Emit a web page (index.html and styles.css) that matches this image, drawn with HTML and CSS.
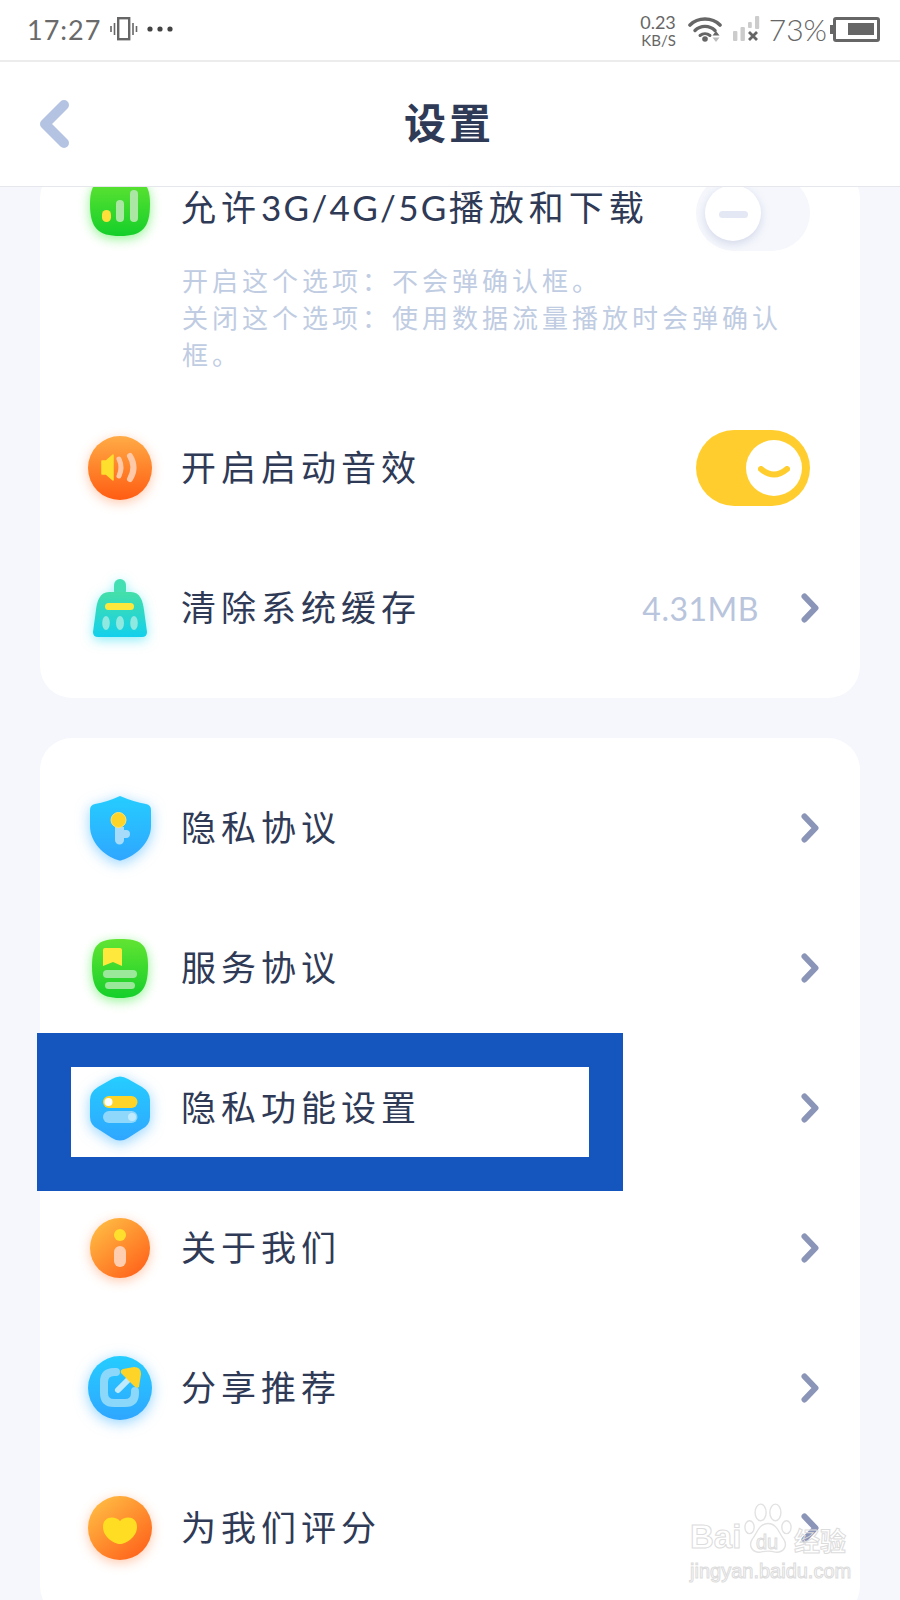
FILE: index.html
```html
<!DOCTYPE html>
<html lang="zh-CN">
<head>
  <meta charset="UTF-8">
  <meta name="viewport" content="width=device-width, initial-scale=1.0">
  <title>设置</title>
  <link rel="stylesheet" href="styles.css">
</head>
<body>

  <!-- shared gradients for the icons -->
  <svg class="defs" aria-hidden="true">
    <defs>
      <linearGradient id="gGreen" x1="0" y1="0" x2="0" y2="1"><stop offset="0" stop-color="#62e432"/><stop offset="1" stop-color="#14cf2a"/></linearGradient>
      <linearGradient id="gOrange" x1="0" y1="0" x2="0" y2="1"><stop offset="0" stop-color="#ffab45"/><stop offset="1" stop-color="#ff5c12"/></linearGradient>
      <linearGradient id="gOrangeDiag" x1="0.2" y1="0.1" x2="0.85" y2="0.9"><stop offset="0" stop-color="#ffb540"/><stop offset="1" stop-color="#ff661c"/></linearGradient>
      <linearGradient id="gTeal" x1="0" y1="0" x2="0" y2="1"><stop offset="0" stop-color="#45dfa8"/><stop offset="1" stop-color="#12d0ec"/></linearGradient>
      <linearGradient id="gBlue" x1="0" y1="0" x2="0" y2="1"><stop offset="0" stop-color="#25cdff"/><stop offset="1" stop-color="#2fa6ff"/></linearGradient>
    </defs>
  </svg>

  <div class="page">
    <div class="statusbar">
      <div class="status-left">
        <span class="clock">17:27</span>
        <svg class="vibrate" width="28" height="26" viewBox="0 0 28 26">
          <rect x="8.2" y="2.2" width="11" height="21" fill="none" stroke="#666" stroke-width="2.4"/>
          <path d="M4.5 7v12M1 10v6M23 7v12M26.5 10v6" stroke="#666" stroke-width="1.6" fill="none"/>
        </svg>
        <svg class="dots" width="26" height="6" viewBox="0 0 26 6">
          <circle cx="3" cy="3" r="2.6" fill="#444"/><circle cx="13" cy="3" r="2.6" fill="#444"/><circle cx="23" cy="3" r="2.6" fill="#444"/>
        </svg>
      </div>
      <div class="status-right">
        <div class="rate"><span class="rate-num">0.23</span><span class="rate-unit">KB/S</span></div>
        <svg class="wifi" width="36" height="26" viewBox="0 0 36 26">
          <path d="M2 9C10 1 24 1 32 9" fill="none" stroke="#666" stroke-width="3.6" stroke-linecap="round"/>
          <path d="M7 14.5C12.5 9 21.5 9 27 14.5" fill="none" stroke="#666" stroke-width="3.4" stroke-linecap="round"/>
          <path d="M12 19.5C15 17 19 17 22 19.5" fill="none" stroke="#666" stroke-width="3" stroke-linecap="round"/>
          <circle cx="17" cy="23" r="2.8" fill="#666"/>
          <path d="M28 15l3.5 4.5h-7z" fill="#666"/><path d="M28 26l3.5-4.5h-7z" fill="#bbb"/>
        </svg>
        <svg class="signal" width="28" height="26" viewBox="0 0 28 26">
          <rect x="0" y="15" width="4.4" height="10" rx="1" fill="#ccc"/>
          <rect x="7.5" y="11" width="4.4" height="14" rx="1" fill="#ccc"/>
          <rect x="15" y="6" width="3.8" height="6" rx="1" fill="#ccc"/>
          <rect x="22" y="0" width="4.2" height="13" rx="1" fill="#ccc"/>
          <path d="M16 16l8 8M24 16l-8 8" stroke="#666" stroke-width="2.8"/>
        </svg>
        <span class="battery-text">73%</span>
        <div class="battery"><div class="battery-level"></div></div>
      </div>
    </div>

    <div class="header">
      <svg class="back" width="32" height="50" viewBox="0 0 32 50">
        <path d="M26 6L7 25l19 19" fill="none" stroke="#b5c3e3" stroke-width="10" stroke-linecap="round" stroke-linejoin="round"/>
      </svg>
      <h1 class="title">设置</h1>
      <span></span>
    </div>

    <div class="scroll">
      <div class="card card-first">
        <div class="row row-head">
          <svg class="icon glow-green" viewBox="0 0 80 80">
            <path d="M40 10C62 10 70 14 70 36C70 60 62 68 40 68C18 68 10 60 10 36C10 14 18 10 40 10Z" fill="url(#gGreen)"/>
            <rect x="22" y="42" width="9" height="12" rx="4.5" fill="#ffdf3a"/>
            <rect x="36" y="32" width="8" height="22" rx="4" fill="#ace6a4"/>
            <rect x="50" y="22" width="8" height="32" rx="4" fill="#ace6a4"/>
          </svg>
          <span class="label">允许<span class="latin">3G/4G/5G</span>播放和下载</span>
          <div class="toggle toggle-off"><div class="knob"><div class="dash"></div></div></div>
        </div>
        <p class="desc">开启这个选项：不会弹确认框。<br>关闭这个选项：使用数据流量播放时会弹确认框。</p>

        <div class="row">
          <svg class="icon glow-orange" viewBox="0 0 80 80">
            <circle cx="40" cy="40" r="32" fill="url(#gOrange)"/>
            <path d="M22 33h4l7-6v25l-7-6h-4z" fill="#ffdf2e" stroke="#ffdf2e" stroke-width="1.5" stroke-linejoin="round"/>
            <path d="M39 31Q43 39.5 39 48" fill="none" stroke="#ffc9a8" stroke-width="5" stroke-linecap="round"/>
            <path d="M50 28Q57 39.5 50 51" fill="none" stroke="#ffc9a8" stroke-width="6" stroke-linecap="round"/>
          </svg>
          <span class="label">开启启动音效</span>
          <div class="toggle toggle-on">
            <div class="knob">
              <svg width="32" height="16" viewBox="0 0 32 16"><path d="M3 3Q16 14 29 3" fill="none" stroke="#ffce2e" stroke-width="6" stroke-linecap="round"/></svg>
            </div>
          </div>
        </div>

        <div class="row">
          <svg class="icon glow-cyan" viewBox="0 0 80 80">
            <rect x="34" y="11" width="12" height="18" rx="6" fill="#45dfb4"/>
            <path d="M29 24H51C60 24 63 33 64 42L67 64Q67 69 62 69H18Q13 69 13 64L16 42C17 33 20 24 29 24Z" fill="url(#gTeal)"/>
            <rect x="25" y="35" width="29" height="7" rx="3.5" fill="#ffe83c"/>
            <ellipse cx="26" cy="55" rx="3.8" ry="7" fill="#8fe9e0"/>
            <ellipse cx="40" cy="55" rx="4" ry="7" fill="#8fe9e0"/>
            <ellipse cx="54" cy="55" rx="3.8" ry="7" fill="#8fe9e0"/>
          </svg>
          <span class="label">清除系统缓存</span>
          <span class="value">4.31MB</span>
          <svg class="chevron" viewBox="0 0 18 30"><path d="M3.5 3.5L14.5 15L3.5 26.5" /></svg>
        </div>
      </div>

      <div class="card">
        <div class="row">
          <svg class="icon glow-blue" viewBox="0 0 80 80">
            <path d="M40 8Q54 14 66 16Q71 17 71 22V38C71 54 56 68 42 72Q40 73 38 72C24 68 10 54 10 38V22Q10 17 15 16Q27 14 40 8Z" fill="url(#gBlue)"/>
            <path d="M35 39h9v3h2a4 4 0 0 1 0 8h-2v2a4.5 4.5 0 0 1-9 0z" fill="#a6dcfa"/>
            <circle cx="38.5" cy="32" r="7.5" fill="#ffd428" stroke="#ffe36a" stroke-width="1"/>
          </svg>
          <span class="label">隐私协议</span>
          <svg class="chevron" viewBox="0 0 18 30"><path d="M3.5 3.5L14.5 15L3.5 26.5" /></svg>
        </div>
        <div class="row">
          <svg class="icon glow-green" viewBox="0 0 80 80">
            <path d="M40 11C60 11 68 15 68 38C68 62 60 70 40 70C20 70 12 62 12 38C12 15 20 11 40 11Z" fill="url(#gGreen)"/>
            <path d="M25 20H40Q42 20 42 22V38L33 34L23 38V22Q23 20 25 20Z" fill="#ffe83c"/>
            <rect x="23" y="42" width="34" height="8" rx="4" fill="#9be89b"/>
            <rect x="25" y="54" width="30" height="7" rx="3.5" fill="#9be89b"/>
          </svg>
          <span class="label">服务协议</span>
          <svg class="chevron" viewBox="0 0 18 30"><path d="M3.5 3.5L14.5 15L3.5 26.5" /></svg>
        </div>
        <div class="row">
          <svg class="icon glow-blue" viewBox="0 0 80 80">
            <path d="M32 11Q40 6 48 11L62 19Q70 24 70 32V49Q70 57 62 61L48 70Q40 75 32 70L18 61Q10 57 10 49V32Q10 24 18 19Z" fill="url(#gBlue)"/>
            <rect x="23" y="28" width="34.5" height="12" rx="6" fill="#ffd428"/>
            <circle cx="28.5" cy="34" r="4" fill="#fff"/>
            <rect x="23" y="43" width="34.5" height="12" rx="6" fill="#8fd8fb"/>
            <circle cx="52" cy="49" r="4" fill="#bfeafe"/>
          </svg>
          <span class="label">隐私功能设置</span>
          <svg class="chevron" viewBox="0 0 18 30"><path d="M3.5 3.5L14.5 15L3.5 26.5" /></svg>
        </div>
        <div class="row">
          <svg class="icon glow-orange" viewBox="0 0 80 80">
            <circle cx="40" cy="40" r="30" fill="url(#gOrangeDiag)"/>
            <circle cx="40" cy="27" r="6" fill="#ffdf2e"/>
            <rect x="34" y="38" width="12" height="21" rx="6" fill="#ffcdb0"/>
          </svg>
          <span class="label">关于我们</span>
          <svg class="chevron" viewBox="0 0 18 30"><path d="M3.5 3.5L14.5 15L3.5 26.5" /></svg>
        </div>
        <div class="row">
          <svg class="icon glow-blue" viewBox="0 0 80 80">
            <circle cx="40" cy="40" r="32" fill="url(#gBlue)"/>
            <path d="M36 24H34Q24 24 24 34V45Q24 55 34 55H45Q55 55 55 45V43" fill="none" stroke="#8cd8fb" stroke-width="8" stroke-linecap="round"/>
            <path d="M38 42L47 33" stroke="#bfeafe" stroke-width="6" stroke-linecap="round"/>
            <path d="M43 21L54 19Q61 19 61 26L59 39Q57 41 54 38L41 25Q40 22 43 21Z" fill="#ffd428"/>
          </svg>
          <span class="label">分享推荐</span>
          <svg class="chevron" viewBox="0 0 18 30"><path d="M3.5 3.5L14.5 15L3.5 26.5" /></svg>
        </div>
        <div class="row">
          <svg class="icon glow-orange" viewBox="0 0 80 80">
            <circle cx="40" cy="40" r="32" fill="url(#gOrangeDiag)"/>
            <path d="M40 33C36 28 23 27 23 39C23 49 34 56 40 56C46 56 57 49 57 39C57 27 44 28 40 33Z" fill="#ffdd22"/>
          </svg>
          <span class="label">为我们评分</span>
          <svg class="chevron" viewBox="0 0 18 30"><path d="M3.5 3.5L14.5 15L3.5 26.5" /></svg>
        </div>
      </div>
    </div>

    <!-- annotation box drawn over the screenshot -->
    <div class="highlight"></div>

    <!-- watermark -->
    <div class="watermark">
      <div class="wm-top">
        <span class="wm-bai">Bai</span>
        <div class="wm-paw">
          <svg width="48" height="52" viewBox="0 0 52 56">
            <g fill="none" stroke="#e2e2e2" stroke-width="1.5">
              <ellipse cx="6" cy="26" rx="5" ry="7"/>
              <ellipse cx="18" cy="10" rx="6" ry="9"/>
              <ellipse cx="34" cy="10" rx="6" ry="9"/>
              <ellipse cx="46" cy="26" rx="5" ry="7"/>
              <path d="M26 22C16 22 14 33 9 39C4 47 10 54 18 53C22 52 30 52 34 53C42 54 48 47 43 39C38 33 36 22 26 22Z"/>
            </g>
          </svg>
          <span class="wm-du">du</span>
        </div>
        <span class="wm-cn">经验</span>
      </div>
      <div class="wm-url">jingyan.baidu.com</div>
    </div>
  </div>

</body>
</html>
```

FILE: styles.css
```css
* {
  box-sizing: border-box;
}
body {
  margin: 0;
  font-family: "Noto Sans CJK SC", "Noto Sans", sans-serif;
  background-color: #f5f7fc;
}
.defs {
  position: absolute;
  width: 0;
  height: 0;
}
.page {
  position: relative;
  width: 900px;
  height: 1600px;
  overflow: hidden;
  background-color: #f5f7fc;
}

/* status bar */
.statusbar {
  height: 62px;
  padding: 0 20px 2px 27px;
  display: flex;
  align-items: center;
  justify-content: space-between;
  background-color: #fff;
  border-bottom: 2px solid #ececec;
}
.status-left, .status-right {
  display: flex;
  align-items: center;
}
.clock {
  font-family: Lato, sans-serif;
  font-size: 27px;
  letter-spacing: 1px;
  color: #6a6a6a;
}
.vibrate {
  margin-left: 9px;
}
.dots {
  margin-left: 9px;
}
.rate {
  display: flex;
  flex-direction: column;
  align-items: flex-end;
  margin-top: 3px;
  font-family: Lato, sans-serif;
  color: #666;
  line-height: 18px;
}
.rate-num {
  font-size: 18px;
}
.rate-unit {
  font-size: 15px;
}
.wifi {
  margin-left: 12px;
}
.signal {
  margin-left: 9px;
}
.battery-text {
  margin-left: 8px;
  font-family: Lato, sans-serif;
  font-size: 30px;
  font-weight: 300;
  color: #666;
}
.battery {
  position: relative;
  width: 47px;
  height: 25px;
  margin-left: 6px;
  padding: 3px 3px 4px 12px;
  border: 3px solid #666;
  border-radius: 3px;
}
.battery::before {
  content: "";
  position: absolute;
  left: -6px;
  top: 5px;
  width: 3px;
  height: 9px;
  background-color: #666;
}
.battery-level {
  height: 100%;
  background-color: #666;
}

/* header */
.header {
  height: 125px;
  display: grid;
  grid-template-columns: 1fr auto 1fr;
  align-items: center;
  background-color: #fff;
  border-bottom: 1px solid #e6e7ec;
}
.back {
  margin-left: 38px;
}
.title {
  margin: 0 2px 8px 0;
  font-size: 42px;
  font-weight: 700;
  letter-spacing: 3px;
  color: #2f3a56;
}

/* scrolled list */
.scroll {
  height: 1413px;
  overflow: hidden;
  padding: 0 40px;
}
.card {
  background-color: #fff;
  border-radius: 32px;
  padding: 20px 0;
  margin-bottom: 40px;
}
.card-first {
  margin-top: -21px;
  padding-top: 0;
}
.row {
  height: 140px;
  padding: 0 50px 0 40px;
  display: flex;
  align-items: center;
}
.row-head {
  height: 84px;
}
.row-head .label {
  margin-top: -5px;
}
.icon {
  width: 80px;
  height: 80px;
  flex-shrink: 0;
  overflow: visible;
}
.glow-green {
  filter: drop-shadow(0 3px 6px rgba(60, 235, 60, 0.55));
}
.glow-orange {
  filter: drop-shadow(0 3px 6px rgba(255, 120, 50, 0.4));
}
.glow-cyan {
  filter: drop-shadow(0 3px 6px rgba(20, 220, 240, 0.5));
}
.glow-blue {
  filter: drop-shadow(0 3px 7px rgba(40, 170, 255, 0.5));
}
.label {
  flex: 1;
  margin-left: 21px;
  margin-top: -6px;
  font-family: Lato, "Noto Sans CJK SC", sans-serif;
  font-size: 35px;
  letter-spacing: 5px;
  color: #2f3a56;
  white-space: nowrap;
}
.latin {
  letter-spacing: 2.3px;
}
.value {
  font-family: Lato, sans-serif;
  font-size: 32px;
  letter-spacing: 0.5px;
  color: #b9c5dc;
  margin-right: 42px;
}
.chevron {
  width: 18px;
  height: 30px;
  margin-right: -9px;
}
.chevron path {
  fill: none;
  stroke: #8b95b8;
  stroke-width: 6;
  stroke-linecap: round;
  stroke-linejoin: round;
}
.desc {
  margin: 0;
  padding: 11px 60px 26px 142px;
  font-size: 26px;
  line-height: 37px;
  letter-spacing: 4px;
  color: #c0cce2;
}

/* toggles */
.toggle {
  width: 114px;
  height: 76px;
  border-radius: 38px;
  display: flex;
  align-items: center;
}
.knob {
  width: 56px;
  height: 56px;
  border-radius: 50%;
  background-color: #fff;
  display: flex;
  align-items: center;
  justify-content: center;
}
.toggle-off {
  margin-top: 9px;
  padding-left: 9px;
  background-color: #f5f7fc;
}
.toggle-off .knob {
  box-shadow: 0 3px 8px rgba(150, 160, 200, 0.35);
}
.dash {
  width: 29px;
  height: 7px;
  margin-top: 4px;
  border-radius: 4px;
  background-color: #e4e8f4;
}
.toggle-on {
  justify-content: flex-end;
  padding-right: 8px;
  background-color: #ffce2e;
}
.toggle-on svg {
  margin-top: 12px;
}

/* blue annotation frame */
.highlight {
  position: absolute;
  left: 37px;
  top: 1033px;
  width: 586px;
  height: 158px;
  border: 34px solid #1456bd;
}

/* baidu watermark */
.watermark {
  position: absolute;
  left: 690px;
  top: 1503px;
  width: 170px;
  color: transparent;
  -webkit-text-stroke: 1px #dcdcdc;
}
.wm-top {
  display: flex;
  align-items: flex-end;
  height: 52px;
  white-space: nowrap;
}
.wm-bai {
  width: 54px;
  font-family: "Liberation Sans", sans-serif;
  font-size: 33px;
  font-weight: 700;
  line-height: 36px;
}
.wm-paw {
  position: relative;
  flex-shrink: 0;
  width: 48px;
  height: 52px;
}
.wm-du {
  position: absolute;
  left: 12px;
  bottom: 2px;
  font-family: "Liberation Sans", sans-serif;
  font-size: 20px;
  line-height: 22px;
}
.wm-cn {
  flex-shrink: 0;
  margin-left: 2px;
  font-size: 26px;
  font-weight: 700;
  line-height: 30px;
}
.wm-url {
  margin-top: 4px;
  font-family: "Liberation Sans", sans-serif;
  font-size: 20px;
  line-height: 24px;
  white-space: nowrap;
}
```
